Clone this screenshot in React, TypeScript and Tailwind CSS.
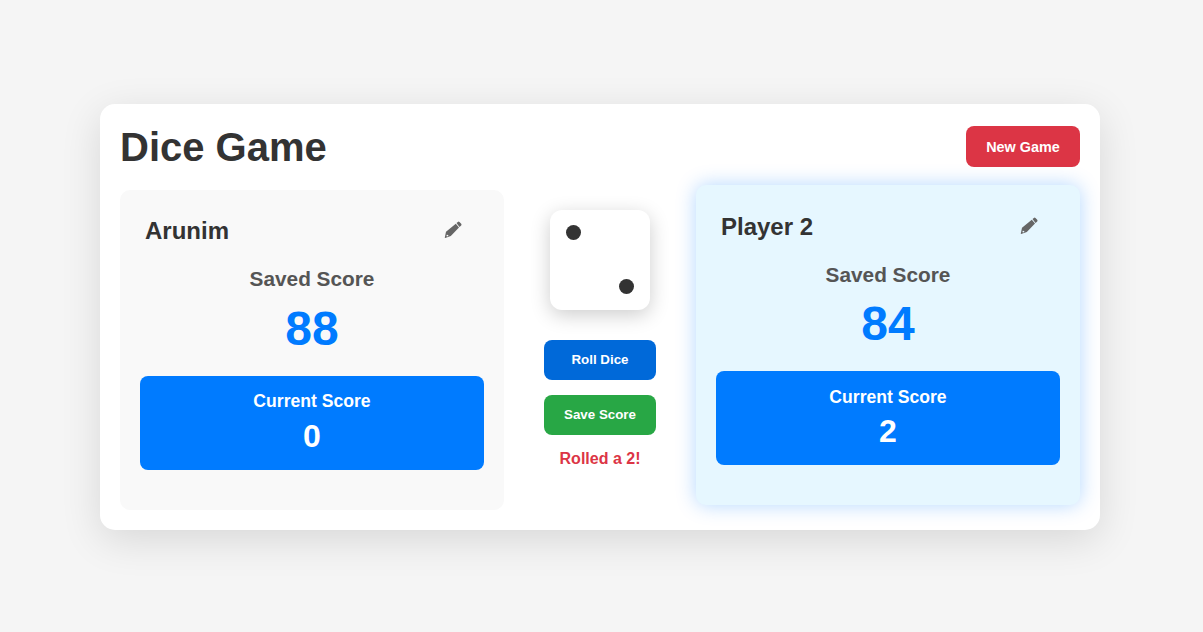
import React from "react";

type PlayerProps = { name: string; saved: number; current: number; active?: boolean };

function Pencil() {
  return (
    <svg viewBox="0 0 18 18" className="h-[18px] w-[18px]" fill="#666" aria-hidden="true">
      <path d="M12.5 2.1 13.9.9Q14.7.3 15.5 1L17.2 2.7Q17.9 3.6 17.2 4.4L15.5 6.1ZM11.8 2.7 15 6.6 6.8 15.1 1.2 17Q.8 17 .8 16.5L2 10.7ZM2.8 13.7 2.4 15 3.1 15.6 4.4 15.1 4.1 14Z" fillRule="evenodd" />
    </svg>
  );
}

function PlayerCard({ name, saved, current, active }: PlayerProps) {
  return (
    <section
      className={`h-80 w-96 rounded-[10px] text-center px-5 ${
        active ? "-mt-[5px] bg-[#e6f7ff] pt-[21px] shadow-[0_0_20px_rgba(0,123,255,0.3)]" : "bg-[#f9f9f9] pt-5"
      }`}
    >
      <div className="flex h-[42px] items-center justify-between pr-[22px] pl-[5px]">
        <h2 className="text-[24px] leading-[28px] font-bold text-[#333]">{name}</h2>
        <span className="mb-[2px]">
          <Pencil />
        </span>
      </div>
      <h3 className="mt-[15px] text-[20.8px] leading-6 font-bold text-[#555]">Saved Score</h3>
      <p className={`text-[48px] leading-[56px] font-bold text-[#007bff] ${active ? "mt-[9px]" : "mt-[10px]"}`}>{saved}</p>
      <div
        className={`mt-[19px] flex h-[94px] flex-col items-center rounded-lg bg-[#007bff] text-white ${
          active ? "pt-4" : "pt-[15px]"
        }`}
      >
        <h4 className="text-[17.6px] leading-5 font-bold">Current Score</h4>
        <p className={`text-[32px] leading-9 font-bold ${active ? "mt-[6px]" : "mt-[7px]"}`}>{current}</p>
      </div>
    </section>
  );
}

export default function App() {
  return (
    <main className="flex h-[632px] justify-center bg-[#f5f5f5] pt-[104px] pr-[3px] font-['Liberation_Sans',Arial,sans-serif]">
      <div className="h-[426px] w-[1000px] rounded-[15px] bg-white p-5 shadow-[0_10px_40px_rgba(0,0,0,0.12)]">
        <header className="flex h-[46px] items-start justify-between">
          <h1 className="text-[40px] leading-[46px] font-bold text-[#333]">Dice Game</h1>
          <button className="mt-[2px] h-[41px] w-[114px] rounded-lg bg-[#dc3545] pt-[2px] text-[14.4px] font-bold text-white">New Game</button>
        </header>
        <div className="mt-5 flex justify-between">
          <PlayerCard name="Arunim" saved={88} current={0} />
          <div className="flex w-28 flex-col items-center pt-5">
            <div className="flex size-[100px] flex-col justify-between rounded-xl bg-white pt-[15px] pr-4 pb-4 pl-4 shadow-[0_5px_20px_rgba(0,0,0,0.2)]">
              <span className="size-[15px] rounded-full bg-[#333]" />
              <span className="size-[15px] self-end rounded-full bg-[#333]" />
            </div>
            <button className="mt-[30px] h-10 w-28 rounded-lg bg-[#0069d9] text-[13.333px] font-bold text-white">Roll Dice</button>
            <button className="mt-[15px] h-10 w-28 rounded-lg bg-[#28a745] text-[13.333px] font-bold text-white">Save Score</button>
            <p className="mt-[15px] text-[16px] leading-[18px] font-bold text-[#dc3545]">Rolled a 2!</p>
          </div>
          <PlayerCard name="Player 2" saved={84} current={2} active />
        </div>
      </div>
    </main>
  );
}
